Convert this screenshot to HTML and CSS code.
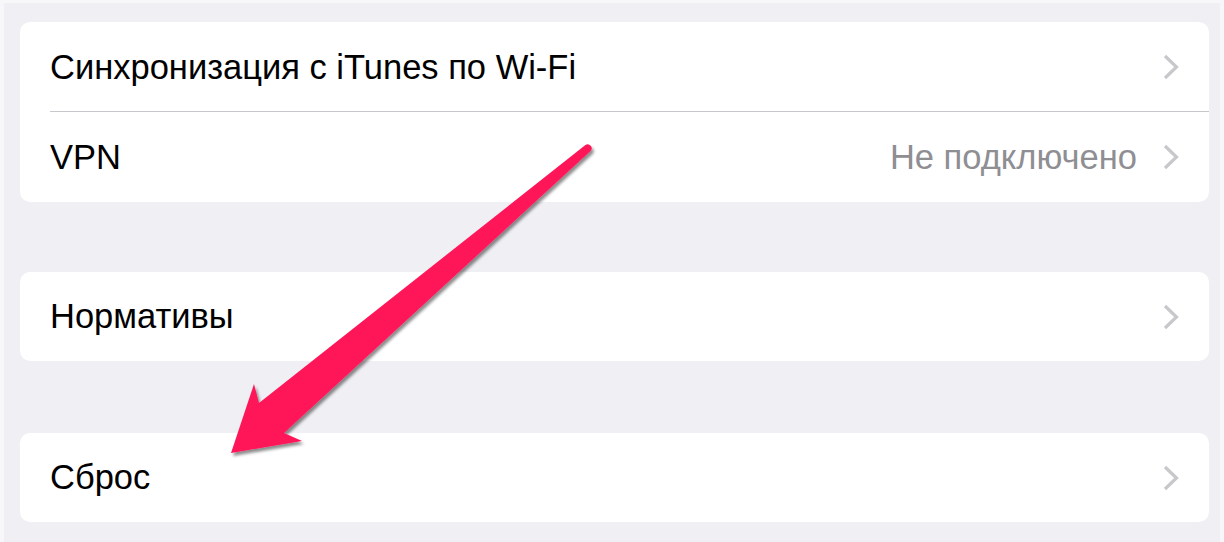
FILE: index.html
```html
<!DOCTYPE html>
<html lang="ru">
<head>
<meta charset="utf-8">
<link rel="stylesheet" href="styles.css">
</head>
<body>
<div class="screen">
  <div class="card">
    <div class="row sep">
      <span class="label">Синхронизация с iTunes по Wi-Fi</span>
      <svg class="chev" viewBox="0 0 16 26"><path d="M2 2 L13.5 13 L2 24"/></svg>
    </div>
    <div class="row">
      <span class="label">VPN</span>
      <span class="value">Не подключено</span>
      <svg class="chev" viewBox="0 0 16 26"><path d="M2 2 L13.5 13 L2 24"/></svg>
    </div>
  </div>
  <div class="card card-2">
    <div class="row">
      <span class="label">Нормативы</span>
      <svg class="chev" viewBox="0 0 16 26"><path d="M2 2 L13.5 13 L2 24"/></svg>
    </div>
  </div>
  <div class="card card-3">
    <div class="row">
      <span class="label">Сброс</span>
      <svg class="chev" viewBox="0 0 16 26"><path d="M2 2 L13.5 13 L2 24"/></svg>
    </div>
  </div>
  <svg class="arrow" viewBox="0 0 1224 542" width="1224" height="542">
    <defs>
      <filter id="sh" x="-10%" y="-10%" width="130%" height="130%">
        <feDropShadow dx="2" dy="3" stdDeviation="1.6" flood-color="#000" flood-opacity="0.45"/>
      </filter>
    </defs>
    <path filter="url(#sh)" fill="#fe1659" d="M585.4 145 A4 4 0 0 1 590.6 151 L284 433 L302 441 L231 453 L254 384 L259 403 Z"/>
  </svg>
</div>
</body>
</html>
```
FILE: styles.css
```css
html, body {
  margin: 0;
  padding: 0;
}
body {
  width: 1224px;
  height: 542px;
  background: #f7f7f9;
  font-family: "Liberation Sans", Arial, sans-serif;
  overflow: hidden;
}
.screen {
  position: relative;
  margin: 3px 4px 0 4px;
  height: 539px;
  background: #efeff4;
  padding: 19px 11px 0 16px;
  box-sizing: border-box;
}
.card {
  background: #fff;
  border-radius: 10px;
  overflow: hidden;
}
.card-2 {
  margin-top: 70px;
}
.card-3 {
  margin-top: 72px;
}
.row {
  position: relative;
  display: flex;
  align-items: center;
  height: 89px;
  padding: 0 30px;
}
.card:first-child .row {
  height: 90px;
}
.sep::after {
  content: "";
  position: absolute;
  left: 30px;
  right: 0;
  bottom: 0;
  height: 1px;
  background: #c8c7cc;
}
.label {
  flex: 1;
  font-size: 34.5px;
  color: #000;
}
.value {
  font-size: 34.5px;
  color: #8e8e93;
  margin-right: 26px;
}
.chev {
  width: 16px;
  height: 26px;
  fill: none;
  stroke: #c7c7cc;
  stroke-width: 3.2;
}
.arrow {
  position: absolute;
  left: -4px;
  top: -3px;
  pointer-events: none;
}
```
